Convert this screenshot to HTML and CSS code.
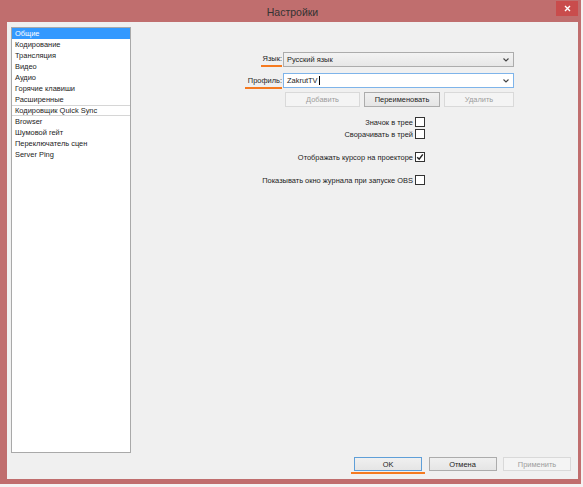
FILE: index.html
```html
<!DOCTYPE html>
<html lang="ru">
<head>
<meta charset="utf-8">
<title>Настройки</title>
<link rel="stylesheet" href="styles.css">
</head>
<body>
<div class="window">
  <div class="titlebar">
    <span></span>
    <div class="title">Настройки</div>
    <div class="close">
      <svg width="7" height="7" viewBox="0 0 7 7"><path d="M1 1L6 6M6 1L1 6" stroke="#fff" stroke-width="1.4" fill="none"/></svg>
    </div>
  </div>
  <div class="panel">
    <div class="main">
      <ul class="nav">
        <li class="sel">Общие</li>
        <li>Кодирование</li>
        <li>Трансляция</li>
        <li>Видео</li>
        <li>Аудио</li>
        <li>Горячие клавиши</li>
        <li>Расширенные</li>
        <li class="sep">Кодировщик Quick Sync</li>
        <li>Browser</li>
        <li>Шумовой гейт</li>
        <li>Переключатель сцен</li>
        <li>Server Ping</li>
      </ul>
      <div class="pane">
        <div class="form">
          <div class="lbl"><span class="mark">Язык:</span></div>
          <div class="combo"><span>Русский язык</span><svg class="arrow" width="6" height="4" viewBox="0 0 6 4"><path d="M0.5 0.5L3 3L5.5 0.5" stroke="#444" stroke-width="1.1" fill="none"/></svg></div>
          <div class="lbl low"><span class="mark wide">Профиль:</span></div>
          <div class="combo edit"><span>ZakrutTV<i class="caret"></i></span><svg class="arrow" width="6" height="4" viewBox="0 0 6 4"><path d="M0.5 0.5L3 3L5.5 0.5" stroke="#444" stroke-width="1.1" fill="none"/></svg></div>
          <div></div>
          <div class="btnrow">
            <button class="btn dis b1">Добавить</button>
            <button class="btn b2">Переименовать</button>
            <button class="btn dis b3">Удалить</button>
          </div>
        </div>
        <div class="checks">
          <div class="chk"><span>Значок в трее</span><span class="box"></span></div>
          <div class="chk"><span>Сворачивать в трей</span><span class="box"></span></div>
          <div class="chk gap"><span>Отображать курсор на проекторе</span><span class="box"><svg width="8" height="8" viewBox="0 0 8 8"><path d="M1.2 4.2L3.2 6.2L6.8 1.4" stroke="#222" stroke-width="1.5" fill="none"/></svg></span></div>
          <div class="chk gap"><span>Показывать окно журнала при запуске OBS</span><span class="box"></span></div>
        </div>
      </div>
    </div>
    <div class="footer">
      <button class="btn def ok">OK</button>
      <button class="btn">Отмена</button>
      <button class="btn dis">Применить</button>
    </div>
  </div>
</div>
</body>
</html>
```
FILE: styles.css
```css
* { box-sizing: border-box; }
html, body { margin: 0; padding: 0; }
body {
  background: #f5f3f3;
  width: 583px;
  height: 487px;
  overflow: hidden;
  font-family: "Liberation Sans", Arial, sans-serif;
  font-size: 7.45px;
  color: #1c1c1c;
}
.window {
  width: 581px;
  height: 484px;
  background: #c06e6e;
  padding: 0 3px 5px 7px;
  display: flex;
  flex-direction: column;
}
.titlebar {
  height: 22px;
  flex: none;
  display: grid;
  grid-template-columns: 1fr auto 1fr;
  align-items: center;
}
.title {
  font-size: 10.5px;
  color: #333;
  padding-top: 1px;
}
.close {
  justify-self: end;
  align-self: start;
  margin-top: 1px;
  width: 22px;
  height: 15px;
  background: #c94c4c;
  display: flex;
  align-items: center;
  justify-content: center;
}
.panel {
  flex: 1;
  background: #f0f0f0;
  padding: 5px 7px 0 4px;
  display: flex;
  flex-direction: column;
}
.main {
  display: flex;
  height: 426px;
  flex: none;
}
.nav {
  list-style: none;
  margin: 0;
  padding: 0;
  width: 120px;
  height: 426px;
  flex: none;
  background: #fff;
  border: 1px solid #a9a9a9;
}
.nav li {
  height: 11px;
  line-height: 11px;
  padding-left: 3px;
  white-space: nowrap;
}
.nav li.sel { background: #3399ff; color: #fff; }
.nav li.sep {
  border-top: 1px solid #d6d6d6;
  border-bottom: 1px solid #d6d6d6;
  line-height: 9px;
}
.pane { flex: 1; }
.form {
  margin-top: 25px;
  display: grid;
  grid-template-columns: 152px 231px;
  grid-template-rows: 15px 21px 19px;
}
.lbl {
  justify-self: end;
  align-self: end;
  margin-right: 1px;
}
.lbl.low { margin-bottom: -1px; }
.mark {
  display: inline-block;
  line-height: 10px;
  padding: 0 0 1px 2px;
  border-bottom: 2px solid #f57a20;
}
.mark.wide { padding-left: 3px; }
.combo {
  align-self: end;
  height: 15px;
  border: 1px solid #acacac;
  background: linear-gradient(#f3f3f3, #e7e7e7);
  display: flex;
  align-items: center;
  justify-content: space-between;
  padding: 0 4px 0 3px;
}
.combo.edit { background: #fff; border-color: #7eb4ea; }
.caret {
  display: inline-block;
  width: 1px;
  height: 9px;
  background: #000;
  vertical-align: middle;
  margin-left: 1px;
}
.btnrow {
  align-self: end;
  display: flex;
  gap: 4px;
  padding-left: 2px;
}
.btn {
  font: inherit;
  height: 15px;
  padding: 0;
  border: 1px solid #acacac;
  background: linear-gradient(#f0f0f0, #e5e5e5);
  color: #1c1c1c;
}
.btn.dis { border-color: #d9d9d9; background: #f4f4f4; color: #9c9c9c; }
.b1 { width: 75px; }
.b2 { width: 76px; }
.b3 { width: 70px; }
.checks {
  width: 294px;
  margin-top: 10px;
  display: flex;
  flex-direction: column;
  align-items: flex-end;
}
.chk {
  display: flex;
  align-items: center;
  gap: 2px;
  height: 10px;
  margin-top: 2px;
}
.chk:first-child { margin-top: 0; }
.chk.gap { margin-top: 13px; }
.box {
  width: 10px;
  height: 10px;
  border: 1px solid #333;
  background: #fff;
  display: flex;
  align-items: center;
  justify-content: center;
}
.footer {
  margin-top: 4px;
  display: flex;
  justify-content: flex-end;
  gap: 6.5px;
}
.footer .btn { width: 68px; height: 14px; }
.btn.def { border-color: #5f9fd8; }
.ok { position: relative; }
.ok::after {
  content: "";
  position: absolute;
  left: -4px;
  right: -4px;
  bottom: -4px;
  height: 2px;
  background: #f57a20;
}
```
